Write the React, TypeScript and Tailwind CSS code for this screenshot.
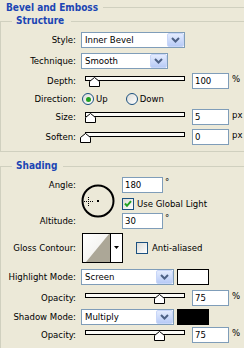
import React from "react";

function Chevron() {
  return (
    <svg width="9" height="6" viewBox="0 0 9 6">
      <path d="M1 1 L4.5 4.5 L8 1" fill="none" stroke="#4d6185" strokeWidth="2" />
    </svg>
  );
}

function Select({ text, w }: { text: string; w: string }) {
  return (
    <div className={`ml-[5px] flex h-[16px] items-stretch border border-[#7f9db9] bg-white ${w}`}>
      <span className="flex-1 pl-[3px] leading-[14px]">{text}</span>
      <span className="flex w-[17px] items-center justify-center rounded-[2px] border border-[#c8d6f8] bg-gradient-to-b from-[#e4ecfe] to-[#b8cbf6]">
        <Chevron />
      </span>
    </div>
  );
}

function Label({ children }: { children: React.ReactNode }) {
  return <span className="w-[75px] shrink-0 text-right leading-[16px]">{children}</span>;
}

function Field({ value, w = "w-[37px]" }: { value: string; w?: string }) {
  return (
    <div className={`flex h-[16px] shrink-0 items-center border border-[#7f9db9] bg-white pl-[2px] ${w}`}>
      {value}
    </div>
  );
}

function Slider({ at }: { at: number }) {
  return (
    <div className="relative ml-[9px] h-[16px] w-[100px] shrink-0">
      <div className="mt-[3px] h-[5px] border border-black bg-[#fbfbf7]" />
      <svg className="absolute top-[4px]" style={{ left: at - 5 }} width="11" height="10" viewBox="0 0 11 10">
        <path d="M0.5 9.5V4.5L5.5 0.5L10.5 4.5V9.5Z" fill="white" stroke="black" />
      </svg>
    </div>
  );
}

function SliderRow({ label, at, value, unit, className = "" }: { label: string; at: number; value: string; unit: string; className?: string }) {
  return (
    <div className={`flex h-[16px] items-start ${className}`}>
      <Label>{label}</Label>
      <Slider at={at} />
      <div className="ml-[7px]">
        <Field value={value} />
      </div>
      <span className="ml-[3px] leading-[12px]">{unit}</span>
    </div>
  );
}

function Radio({ on }: { on?: boolean }) {
  return (
    <span className="flex h-[12px] w-[12px] items-center justify-center rounded-full border border-[#1c5180] bg-gradient-to-br from-[#dcdcd7] to-white">
      {on && <span className="h-[5px] w-[5px] rounded-full bg-[#21a121]" />}
    </span>
  );
}

function Check({ on }: { on?: boolean }) {
  return (
    <span className="flex h-[12px] w-[12px] shrink-0 items-center justify-center border border-[#1c5180] bg-gradient-to-br from-[#dcdcd7] to-white">
      {on && (
        <svg width="8" height="8" viewBox="0 0 8 8">
          <path d="M1 3.5 L3 5.8 L7 1.2" fill="none" stroke="#21a121" strokeWidth="2" />
        </svg>
      )}
    </span>
  );
}

function Legend({ children, pr }: { children: React.ReactNode; pr: string }) {
  return (
    <legend className={`ml-[11px] pl-[4px] text-[10px] font-bold leading-[14px] text-[#1b45b4] ${pr}`}>{children}</legend>
  );
}

export default function App() {
  return (
    <div className="h-[348px] w-[244px] overflow-hidden bg-[#ece9d8] font-['DejaVu_Sans_Condensed','DejaVu_Sans',sans-serif] text-[9.5px] text-black [font-stretch:condensed]">
      {/* Title */}
      <div className="flex h-[14px] items-center">
        <span className="pl-[6px] text-[10px] font-bold text-[#1b45b4]">Bevel and Emboss</span>
        <span className="ml-[5px] h-px flex-1 bg-[#d0d0bf]" />
      </div>

      {/* Structure */}
      <fieldset className="border-b border-l border-t border-[#d0d0bf] pb-[6px]">
        <Legend pr="pr-[7px]">Structure</Legend>
        <div className="mt-[4px] flex h-[16px] items-center">
          <Label>Style:</Label>
          <Select text="Inner Bevel" w="w-[104px]" />
        </div>
        <div className="mt-[5px] flex h-[16px] items-center">
          <Label>Technique:</Label>
          <Select text="Smooth" w="w-[87px]" />
        </div>
        <SliderRow className="mt-[4px]" label="Depth:" at={9} value="100" unit="%" />
        <div className="flex h-[20px] items-center">
          <Label>Direction:</Label>
          <span className="ml-[6px]"><Radio on /></span>
          <span className="ml-[2px]">Up</span>
          <span className="ml-[18px]"><Radio /></span>
          <span className="ml-[2px]">Down</span>
        </div>
        <SliderRow label="Size:" at={4.5} value="5" unit="px" />
        <SliderRow className="mt-[4px]" label="Soften:" at={-0.5} value="0" unit="px" />
      </fieldset>

      {/* Shading */}
      <fieldset className="mt-[7px] border-l border-t border-[#d0d0bf] pb-[10px]">
        <Legend pr="pr-[6px]">Shading</Legend>
        <div className="mt-[4px] flex items-start">
          <div className="flex h-[52px] w-[75px] shrink-0 flex-col justify-between text-right leading-[16px]">
            <span>Angle:</span>
            <span>Altitude:</span>
          </div>
          <svg className="ml-[5px] mt-[7px] shrink-0" width="34" height="34" viewBox="0 0 34 34">
            <circle cx="17" cy="17" r="15.5" fill="none" stroke="black" strokeWidth="2" />
            <rect x="16" y="16" width="2" height="2" fill="black" />
            <g fill="black">
              <rect x="7" y="13" width="1" height="1" />
              <rect x="7" y="15" width="1" height="1" />
              <rect x="7" y="19" width="1" height="1" />
              <rect x="7" y="21" width="1" height="1" />
              <rect x="3" y="17" width="1" height="1" />
              <rect x="5" y="17" width="1" height="1" />
              <rect x="9" y="17" width="1" height="1" />
              <rect x="11" y="17" width="1" height="1" />
              <rect x="7" y="17" width="1" height="1" />
            </g>
          </svg>
          <div className="ml-[7px] flex flex-col">
            <div className="flex items-start">
              <Field value="180" w="w-[41px]" />
              <span className="ml-[2px] leading-[10px]">°</span>
            </div>
            <div className="mt-[5px] flex h-[12px] items-center">
              <Check on />
              <span className="ml-[3px]">Use Global Light</span>
            </div>
            <div className="mt-[3px] flex items-start">
              <Field value="30" w="w-[41px]" />
              <span className="ml-[2px] leading-[10px]">°</span>
            </div>
          </div>
        </div>

        <div className="mt-[4px] flex h-[30px] items-center">
          <Label>Gloss Contour:</Label>
          <svg className="ml-[6px] shrink-0" width="41" height="30" viewBox="0 0 41 30">
            <defs>
              <linearGradient id="cw" x1="0" y1="0" x2="1" y2="1">
                <stop offset="0" stopColor="#ffffff" />
                <stop offset="1" stopColor="#ecebe6" />
              </linearGradient>
            </defs>
            <rect x="0.5" y="0.5" width="40" height="29" fill="white" stroke="black" />
            <polygon points="1,1 27,1 4,29 1,29" fill="url(#cw)" />
            <polygon points="27,1 28,1 28,29 4,29" fill="#aca797" />
            <line x1="28.5" y1="0" x2="28.5" y2="30" stroke="black" />
            <polygon points="32,13 37,13 34.5,16" fill="black" />
          </svg>
          <span className="ml-[13px]"><Check /></span>
          <span className="ml-[4px]">Anti-aliased</span>
        </div>

        <div className="mt-[6px] flex h-[16px] items-center">
          <Label>Highlight Mode:</Label>
          <Select text="Screen" w="w-[93px]" />
          <span className="ml-[3px] h-[16px] w-[32px] border border-black bg-white" />
        </div>
        <SliderRow className="mt-[5px]" label="Opacity:" at={74} value="75" unit="%" />
        <div className="mt-[3px] flex h-[16px] items-center">
          <Label>Shadow Mode:</Label>
          <Select text="Multiply" w="w-[93px]" />
          <span className="ml-[3px] h-[16px] w-[32px] border border-black bg-black" />
        </div>
        <SliderRow className="mt-[2px]" label="Opacity:" at={74} value="75" unit="%" />
      </fieldset>
    </div>
  );
}
